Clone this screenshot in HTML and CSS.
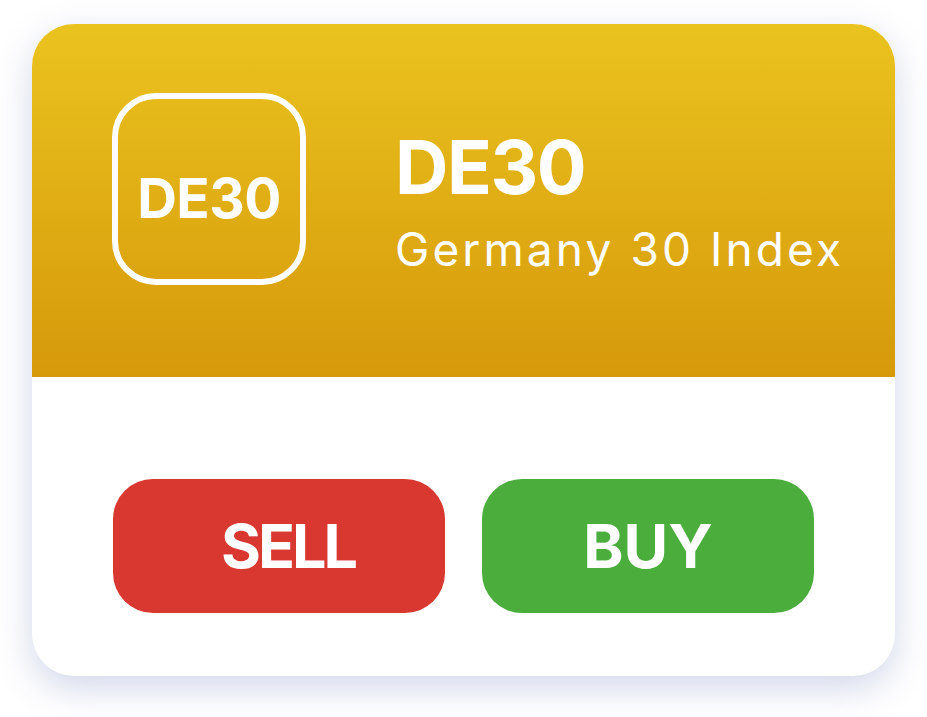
FILE: index.html
```html
<!DOCTYPE html>
<html lang="en">
<head>
<meta charset="utf-8">
<title>DE30</title>
<link rel="stylesheet" href="styles.css">
</head>
<body>
<div class="card">
  <div class="header">
    <div class="logo"><span>DE30</span></div>
    <div class="titles">
      <div class="symbol">DE30</div>
      <div class="name">Germany 30 Index</div>
    </div>
  </div>
  <div class="actions">
    <button class="btn sell">SELL</button>
    <button class="btn buy">BUY</button>
  </div>
</div>
</body>
</html>
```
FILE: styles.css
```css
html, body {
  margin: 0;
  padding: 0;
  background: #ffffff;
}
body {
  padding: 24px 32px 41px 32px;
  font-family: Inter, "Noto Sans", sans-serif;
}
.card {
  width: 863px;
  height: 652px;
  border-radius: 42px;
  background: #ffffff;
  overflow: hidden;
  box-shadow: 0 12px 36px rgba(95, 110, 180, 0.28);
  display: flex;
  flex-direction: column;
}
.header {
  height: 353px;
  box-sizing: border-box;
  background: linear-gradient(180deg, #eac31f 0%, #d6990a 100%);
  display: flex;
  align-items: flex-start;
  padding: 69px 0 0 80px;
}
.logo {
  width: 194px;
  height: 192px;
  box-sizing: border-box;
  border: 6px solid #ffffff;
  border-radius: 44px;
  padding-top: 18px;
  display: flex;
  align-items: center;
  justify-content: center;
}
.logo span {
  color: #fff;
  font-weight: 700;
  font-size: 55px;
  line-height: 1;
  letter-spacing: -0.5px;
}
.titles {
  margin-left: 89px;
  padding-top: 37px;
  color: #fff;
}
.symbol {
  font-weight: 700;
  font-size: 74px;
  line-height: 1;
  letter-spacing: -1.5px;
}
.name {
  font-weight: 400;
  font-size: 46px;
  line-height: 1;
  letter-spacing: 3.1px;
  margin-top: 22px;
}
.actions {
  display: flex;
  gap: 37px;
  padding: 102px 0 0 81px;
}
.btn {
  width: 332px;
  height: 134px;
  border: none;
  border-radius: 40px;
  color: #fff;
  font-family: Inter, "Noto Sans", sans-serif;
  font-weight: 700;
  font-size: 61px;
  padding: 0;
}
.sell {
  background: #d93831;
  padding-left: 18px;
  letter-spacing: -3px;
}
.buy { background: #4aad3c; }
```
